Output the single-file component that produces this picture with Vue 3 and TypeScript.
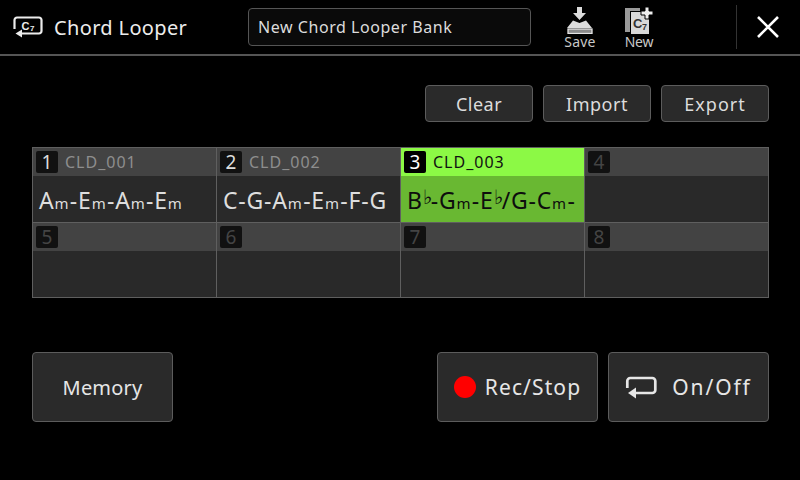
<script setup lang="ts">
interface Part { t: string; s?: boolean }
interface Cell { n: number; name: string; chord: Part[]; active?: boolean }
const p = (...xs: string[]): Part[] => xs.map((t) => ({ t, s: t === 'm' || t === '♭' }))
const cells: Cell[] = [
  { n: 1, name: 'CLD_001', chord: p('A', 'm', '-E', 'm', '-A', 'm', '-E', 'm') },
  { n: 2, name: 'CLD_002', chord: p('C-G-A', 'm', '-E', 'm', '-F-G') },
  { n: 3, name: 'CLD_003', chord: p('B', '♭', '-G', 'm', '-E', '♭', '/G-C', 'm', '-'), active: true },
  { n: 4, name: '', chord: [] },
  { n: 5, name: '', chord: [] },
  { n: 6, name: '', chord: [] },
  { n: 7, name: '', chord: [] },
  { n: 8, name: '', chord: [] }
]
</script>

<template>
  <div class="screen">
    <header class="top">
      <div class="title">
        <svg class="logo" width="30" height="24" viewBox="0 0 30 24">
          <path d="M1.500 14V5a2.500 2.500 0 0 1 2.500-2.500h22A2.500 2.500 0 0 1 28.500 5v11a2.500 2.500 0 0 1-2.500 2.500H8" fill="none" stroke="#ececec" stroke-width="2.200"/>
          <path d="M9 14.500v8l-6.500-4z" fill="#ececec"/>
          <text x="8.500" y="15" class="logo-c">C</text>
          <text x="17" y="15.500" class="logo-7">7</text>
        </svg>
        <span>Chord Looper</span>
      </div>
      <div class="bank">New Chord Looper Bank</div>
      <button class="tool save">
        <svg width="26" height="27" viewBox="0 0 26 27">
          <path d="M10 0h5v6h4l-6.500 7L6 6h4z" fill="#dcdcdc"/>
          <path d="M6 13.500l6.500 2.500 6.500-2.500 6 7.500H0z" fill="#dcdcdc"/>
          <rect x="1" y="22" width="24" height="4.500" fill="#8a8a8a" stroke="#e4e4e4" stroke-width="1.300"/>
        </svg>
        <span>Save</span>
      </button>
      <button class="tool new">
        <svg width="28" height="27" viewBox="0 0 28 27">
          <path d="M0 1h15v3H5v21H0z" fill="#9a9a9a"/>
          <path d="M6 5h18v22H6z" fill="#d8d8d8"/>
          <path d="M20 0h4v4h4v4h-4v4h-4V8h-4V4h4z" fill="#eee" stroke="#000" stroke-width="1"/>
          <text x="8" y="21" class="new-c">C</text>
          <text x="17" y="23" class="new-7">7</text>
        </svg>
        <span>New</span>
      </button>
      <button class="close" aria-label="Close">
        <svg width="22" height="22" viewBox="0 0 22 22">
          <path d="M1 1l20 20M21 1L1 21" stroke="#fff" stroke-width="2.600" fill="none"/>
        </svg>
      </button>
    </header>

    <main class="body">
      <div class="actions">
        <button class="btn small clear">Clear</button>
        <button class="btn small import">Import</button>
        <button class="btn small export">Export</button>
      </div>

      <div class="grid">
        <div v-for="c in cells" :key="c.n" class="cell" :class="{ active: c.active, empty: !c.name }">
          <div class="cell-head">
            <span class="num">{{ c.n }}</span>
            <span class="name">{{ c.name }}</span>
          </div>
          <div class="cell-body">
            <span v-for="(x, i) in c.chord" :key="i" :class="{ sub: x.s && x.t === 'm', flat: x.t === '♭' }">{{ x.t }}</span>
          </div>
        </div>
      </div>

      <div class="bottom">
        <button class="btn big memory">Memory</button>
        <div class="bottom-right">
          <button class="btn big rec"><i class="dot"></i>Rec/Stop</button>
          <button class="btn big onoff">
            <svg width="32" height="24" viewBox="0 0 32 24">
              <path d="M2.300 13V6a3 3 0 0 1 3-3h22a3 3 0 0 1 3 3v9a3 3 0 0 1-3 3H10" fill="none" stroke="#e6e6e6" stroke-width="2.700"/>
              <path d="M11 12.500v11l-8-5.500z" fill="#e6e6e6"/>
            </svg>
            On/Off
          </button>
        </div>
      </div>
    </main>
  </div>
</template>

<style>
html, body { margin: 0; background: #000; }
</style>

<style scoped>
.screen {
  width: 800px;
  height: 480px;
  background: #000;
  overflow: hidden;
  font-family: "Noto Sans", "Open Sans", sans-serif;
  color: #e6e6e6;
  display: flex;
  flex-direction: column;
}
button { font-family: inherit; cursor: pointer; padding: 0; }
.top {
  height: 54px;
  flex: none;
  box-sizing: content-box;
  border-bottom: 2px solid #555;
  display: flex;
  align-items: center;
}
.title {
  width: 248px;
  display: flex;
  align-items: center;
  gap: 11px;
  padding-left: 13px;
  box-sizing: border-box;
  font-size: 20px;
  letter-spacing: 0.35px;
  color: #ececec;
  flex: none;
}
.logo { flex: none; }
.logo-c { font: 700 11px "Liberation Sans", sans-serif; fill: #ececec; }
.logo-7 { font: 700 8px "Liberation Sans", sans-serif; fill: #ececec; }
.new-c { font: 700 13px "Liberation Sans", sans-serif; fill: #333; }
.new-7 { font: 700 9px "Liberation Sans", sans-serif; fill: #333; }
.bank {
  width: 283px;
  height: 38px;
  box-sizing: border-box;
  border: 1px solid #555;
  border-radius: 4px;
  background: #0a0a0a;
  padding-left: 9px;
  line-height: 36px;
  font-size: 16px;
  letter-spacing: 0.55px;
  color: #dcdcdc;
  flex: none;
}
.tool {
  background: none;
  border: 0;
  color: #c8c8c8;
  font-size: 14px;
  line-height: 15px;
  letter-spacing: 0.2px;
  width: 60px;
  padding-top: 2px;
  display: flex;
  flex-direction: column;
  align-items: center;
  flex: none;
}
.tool svg { display: block; }
.save { margin-left: 19px; }
.new { margin-left: -1px; letter-spacing: -0.2px; }
.close {
  margin-left: 67px;
  width: 63px;
  height: 44px;
  background: none;
  border: 0;
  border-left: 1px solid #333;
  display: flex;
  align-items: center;
  justify-content: center;
}
.body {
  flex: 1;
  display: flex;
  flex-direction: column;
  padding: 29px 31px 0 32px;
}
.btn {
  background: #2a2a2a;
  border: 1px solid #5c5c5c;
  border-radius: 4px;
  color: #e6e6e6;
  box-sizing: border-box;
  letter-spacing: 0.6px;
}
.actions {
  display: flex;
  justify-content: flex-end;
  gap: 10px;
}
.small { width: 108px; height: 37px; font-size: 18px; color: #dcdcdc; letter-spacing: 0.5px; }
.export { letter-spacing: 1px; }
.grid {
  margin-top: 25px;
  width: 737px;
  box-sizing: border-box;
  display: grid;
  grid-template-columns: repeat(4, 1fr);
  border: 1px solid #5f5f5f;
  border-width: 1px 1px 0 1px;
  background: #5f5f5f;
  gap: 0 1px;
}
.cell { height: 75px; border-bottom: 1px solid #5f5f5f; box-sizing: border-box; }
.cell-head {
  height: 28px;
  background: #434343;
  display: flex;
  align-items: center;
  padding-left: 3px;
  gap: 7px;
  box-sizing: border-box;
}
.num {
  width: 22px;
  height: 22px;
  border-radius: 2px;
  background: #111;
  color: #ddd;
  font-size: 19px;
  line-height: 22px;
  text-align: center;
  flex: none;
}
.empty .num { color: #444; }
.name { font-size: 16px; color: #8e8e8e; letter-spacing: 1px; }
.cell-body {
  height: 46px;
  background: #292929;
  box-sizing: border-box;
  padding-left: 6px;
  line-height: 48px;
  font-size: 23px;
  letter-spacing: 0.8px;
  color: #dedede;
  white-space: nowrap;
  overflow: hidden;
}
.sub { font-size: 15px; letter-spacing: 1.3px; }
.flat { font-size: 20px; vertical-align: 5px; line-height: 0; letter-spacing: -1px; }
.active .cell-head { background: #8cf945; }
.active .num { background: #000; color: #fff; }
.active .name { color: #111; }
.active .cell-body { background: #69b832; color: #0d0d0d; }
.bottom {
  margin-top: 54px;
  display: flex;
  justify-content: space-between;
}
.bottom-right { display: flex; gap: 10px; }
.big {
  height: 70px;
  font-size: 21px;
  display: flex;
  align-items: center;
  justify-content: center;
}
.memory { width: 141px; font-size: 20px; letter-spacing: 0.2px; }
.rec { width: 161px; gap: 9px; letter-spacing: 1.1px; }
.onoff { width: 161px; gap: 15px; letter-spacing: 1.9px; }
.dot { width: 22px; height: 22px; border-radius: 50%; background: #f00; display: block; }
</style>
